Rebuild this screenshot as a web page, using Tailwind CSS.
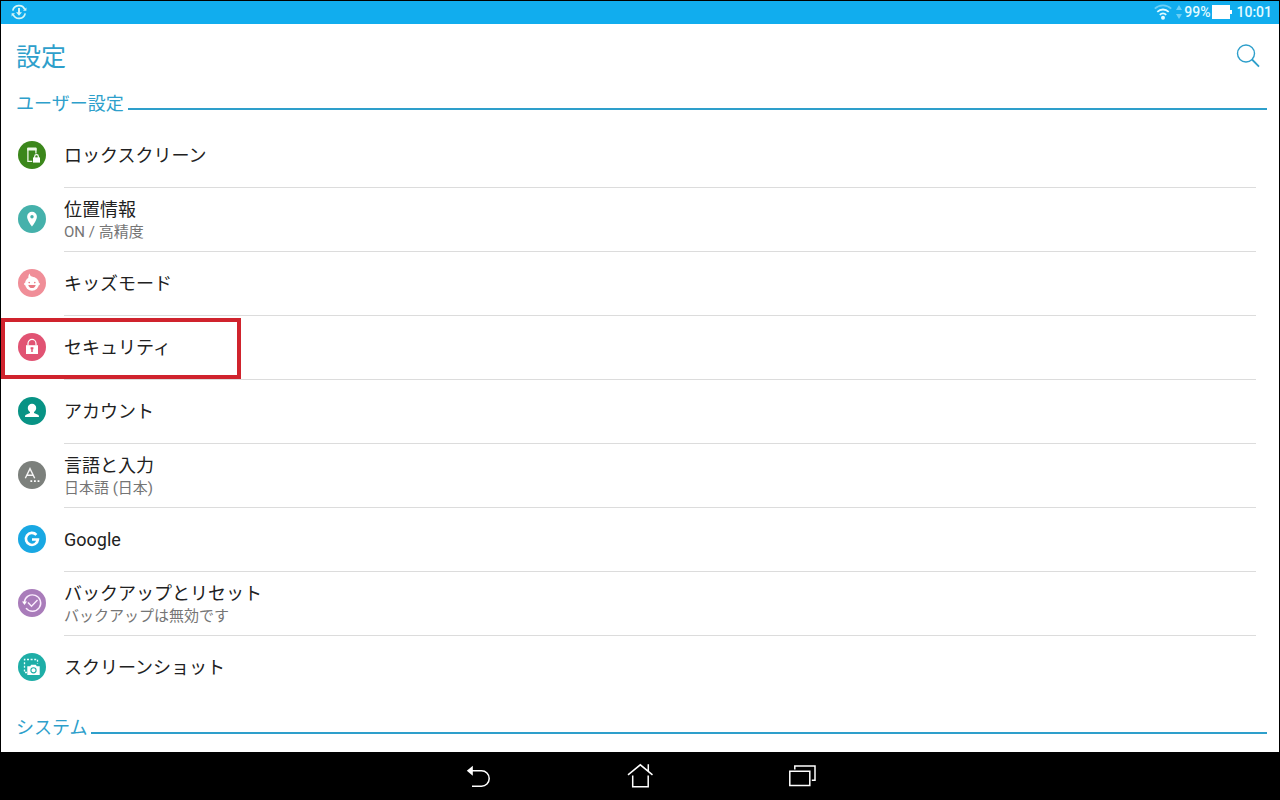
<!doctype html>
<html lang="ja">
<head>
    <meta charset="UTF-8">
    <meta name="viewport" content="width=device-width, initial-scale=1.0">
    <title>設定</title>
    <script src="https://cdn.jsdelivr.net/npm/@tailwindcss/browser@4"></script>
</head>
<body class="bg-black font-['Roboto','Noto_Sans_CJK_JP',sans-serif]">
<div class="flex flex-col h-screen px-px pt-px">
    <!-- status bar -->
    <header class="flex items-center justify-between h-[23px] shrink-0 bg-[#11adee] pl-2.5 pr-[7px] pb-px text-white">
        <svg viewBox="0 0 16 16" class="w-4 h-4" fill="none" stroke="#d5f5f5" stroke-width="1.7">
            <path d="M1.8 6.6A6.3 6.3 0 0 1 13.800 5.500M14.200 9.400A6.300 6.300 0 0 1 2.200 10.500"/>
            <path d="M8 4v6" stroke-width="2"/>
            <path d="M5 8.200h6L8 11.800zM12 6.800h3.400V3.600zM4 9.200H.6v3.200z" fill="#d5f5f5" stroke="none"/>
        </svg>
        <div class="flex items-center text-sm leading-5 font-medium text-[#e2fbff]">
            <svg viewBox="0 0 18 16" class="w-[18px] h-4" fill="none" stroke="#e2fbff" stroke-width="1.8">
                <path d="M.8 4.6a11.8 11.8 0 0 1 16.4 0" stroke="#6ccff5"/>
                <path d="M3.3 7.8a8.2 8.2 0 0 1 11.4 0M5.8 10.8a4.6 4.6 0 0 1 6.4 0"/>
                <circle cx="9" cy="13.8" r="2" fill="#e2fbff" stroke="none"/>
            </svg>
            <svg viewBox="0 0 6 16" class="w-1.5 h-4 ml-1 mr-0.5" fill="#6ccff5">
                <path d="M0 6l3-5 3 5zM0 10h6l-3 5z"/>
            </svg>
            <span>99%</span>
            <svg viewBox="0 0 20 14" class="w-5 h-3.5 ml-0.5 mr-1" fill="#fff">
                <path d="M0 0h18v14H0zM18 5h2v4h-2z"/>
            </svg>
            <time>10:01</time>
        </div>
    </header>

    <main class="flex-1 min-h-0 overflow-hidden bg-white">
        <div class="flex items-center justify-between h-16 pl-[15px] pr-[19px]">
            <h1 class="pt-1 text-[25px] leading-8 text-[#2e9fcb]">設定</h1>
            <button type="button" aria-label="検索">
                <svg viewBox="0 0 24 24" class="w-6 h-6" fill="none" stroke="#2e9fcb" stroke-width="1.4">
                    <circle cx="10" cy="9.5" r="8.5"/>
                    <path d="M16 15.5l7 7.2" stroke-width="1.8"/>
                </svg>
            </button>
        </div>

        <section>
            <div class="flex items-center h-9 pb-1 gap-1 pl-[15px] pr-3">
                <h2 class="text-lg leading-6 text-[#2e9fcb]">ユーザー設定</h2>
                <div class="flex-1 h-0.5 mt-2.5 bg-[#2e9fcb]"></div>
            </div>
            <ul class="text-lg leading-6 text-[#212121]">
                <li>
                    <a href="#" class="flex items-center gap-[18px] pl-[17px] pr-[23px]">
                        <svg viewBox="0 0 28 28" class="w-7 h-7 mb-0.5">
                            <circle cx="14" cy="14" r="14" fill="#3b871b"/>
                            <path d="M17.9 12.5V8h-8v12.3h4.3" fill="none" stroke="#eef9e8" stroke-width="1.3"/>
                            <path d="M10.2 6.4h7.4c.6 0 1 .4 1 1v2.2H9.2V7.4c0-.6.4-1 1-1z" fill="#eef9e8"/>
                            <path d="M15 16.4h7v5.2h-7z" fill="#fff"/>
                            <path d="M16.7 17v-1.5a1.8 1.8 0 0 1 3.6 0V17" fill="none" stroke="#fff" stroke-width="1.2"/>
                        </svg>
                        <span class="flex flex-1 items-center h-16 border-b border-[#dcdcdc]">ロックスクリーン</span>
                    </a>
                </li>
                <li>
                    <a href="#" class="flex items-center gap-[18px] pl-[17px] pr-[23px]">
                        <svg viewBox="0 0 28 28" class="w-7 h-7 mb-0.5">
                            <circle cx="14" cy="14" r="14" fill="#45b1ab"/>
                            <path d="M14 6.8a4.9 4.9 0 0 0-4.9 4.9c0 3.600 4.900 9.800 4.900 9.800s4.900-6.200 4.900-9.800A4.900 4.900 0 0 0 14 6.800z" fill="#fff"/>
                            <circle cx="14" cy="11.7" r="1.7" fill="#45b1ab"/>
                        </svg>
                        <span class="flex flex-1 flex-col justify-center h-16 border-b border-[#dcdcdc]">
                            <span>位置情報</span>
                            <span class="text-[15px] leading-5 text-[#757575]">ON / 高精度</span>
                        </span>
                    </a>
                </li>
                <li>
                    <a href="#" class="flex items-center gap-[18px] pl-[17px] pr-[23px]">
                        <svg viewBox="0 0 28 28" class="w-7 h-7 mb-0.5">
                            <circle cx="14" cy="14" r="14" fill="#f08e98"/>
                            <g fill="#fff">
                                <circle cx="14" cy="14.8" r="7"/>
                                <circle cx="7.3" cy="15" r="1.2"/>
                                <circle cx="20.7" cy="15" r="1.2"/>
                                <path d="M10.500 9.500c-.4-2 .1-3.600 1.100-4.900.3 2 1.400 3.200 3.400 3.500z"/>
                            </g>
                            <circle cx="11.2" cy="13.6" r=".8" fill="#e87983"/>
                            <circle cx="16.8" cy="13.6" r=".8" fill="#e87983"/>
                            <path d="M10.3 16h7.4c-.3 2-1.8 3.100-3.700 3.100s-3.400-1.100-3.700-3.100z" fill="#e87983"/>
                        </svg>
                        <span class="flex flex-1 items-center h-16 border-b border-[#dcdcdc]">キッズモード</span>
                    </a>
                </li>
                <li class="relative">
                    <a href="#" class="flex items-center gap-[18px] pl-[17px] pr-[23px]">
                        <svg viewBox="0 0 28 28" class="w-7 h-7 mb-0.5">
                            <circle cx="14" cy="14" r="14" fill="#e15373"/>
                            <path d="M8 12.2h12V21H8z" fill="#fff"/>
                            <path d="M10 12.5v-2.1a4 4 0 0 1 8 0v2.1" fill="none" stroke="#fff" stroke-width="1.2"/>
                            <path d="M12.6 14.3h2.8v1.9h-.7v2.7h-1.4v-2.7h-.7z" fill="#e15373"/>
                        </svg>
                        <span class="flex flex-1 items-center h-16 border-b border-[#dcdcdc]">セキュリティ</span>
                    </a>
                    <!-- highlight frame -->
                    <div class="absolute left-0 top-0.5 w-60 h-[61px] border-4 border-[#d0232d] pointer-events-none"></div>
                </li>
                <li>
                    <a href="#" class="flex items-center gap-[18px] pl-[17px] pr-[23px]">
                        <svg viewBox="0 0 28 28" class="w-7 h-7 mb-0.5">
                            <circle cx="14" cy="14" r="14" fill="#089385"/>
                            <path d="M14 6.8a4.2 4.2 0 0 0-4.2 4.2c0 1.700.9 3.100 2.200 3.900v1.100l-4 1.700c-.7.300-1 1-1 2.300h14c0-1.300-.3-2-1-2.300L16 16v-1.100c1.300-.8 2.200-2.200 2.200-3.900A4.200 4.200 0 0 0 14 6.800z" fill="#fff"/>
                        </svg>
                        <span class="flex flex-1 items-center h-16 border-b border-[#dcdcdc]">アカウント</span>
                    </a>
                </li>
                <li>
                    <a href="#" class="flex items-center gap-[18px] pl-[17px] pr-[23px]">
                        <svg viewBox="0 0 28 28" class="w-7 h-7 mb-0.5">
                            <circle cx="14" cy="14" r="14" fill="#7c807c"/>
                            <path d="M7.3 17.2L12 7.6l4.7 9.6M8.9 14.3h6.2" fill="none" stroke="#f4f4f4" stroke-width="1.4"/>
                            <path d="M12.4 19.3h1.8v1.8h-1.8zM16 19.3h1.8v1.8H16zM19.6 19.3h1.8v1.8h-1.8z" fill="#fff"/>
                        </svg>
                        <span class="flex flex-1 flex-col justify-center h-16 border-b border-[#dcdcdc]">
                            <span>言語と入力</span>
                            <span class="text-[15px] leading-5 text-[#757575]">日本語 (日本)</span>
                        </span>
                    </a>
                </li>
                <li>
                    <a href="#" class="flex items-center gap-[18px] pl-[17px] pr-[23px]">
                        <svg viewBox="0 0 28 28" class="w-7 h-7 mb-0.5">
                            <circle cx="14" cy="14" r="14" fill="#19a8e3"/>
                            <path d="M18.4 9.9a6 6 0 1 0 1.500 4.600H14" fill="none" stroke="#fff" stroke-width="2.6"/>
                        </svg>
                        <span class="flex flex-1 items-center h-16 border-b border-[#dcdcdc]">Google</span>
                    </a>
                </li>
                <li>
                    <a href="#" class="flex items-center gap-[18px] pl-[17px] pr-[23px]">
                        <svg viewBox="0 0 28 28" class="w-7 h-7 mb-0.5">
                            <circle cx="14" cy="14" r="14" fill="#a97cba"/>
                            <path d="M6.3 13.5A8.2 8.2 0 1 1 8 19.1M10 13.5l3.5 3.7 6-6.3" fill="none" stroke="#fbeefe" stroke-width="1.4"/>
                            <path d="M4 12.6h5l-2.5 3.3z" fill="#fff"/>
                        </svg>
                        <span class="flex flex-1 flex-col justify-center h-16 border-b border-[#dcdcdc]">
                            <span>バックアップとリセット</span>
                            <span class="text-[15px] leading-5 text-[#757575]">バックアップは無効です</span>
                        </span>
                    </a>
                </li>
                <li>
                    <a href="#" class="flex items-center gap-[18px] pl-[17px] pr-[23px]">
                        <svg viewBox="0 0 28 28" class="w-7 h-7 mb-0.5">
                            <circle cx="14" cy="14" r="14" fill="#1eaea7"/>
                            <path d="M9 19.5H6.5v-13h13V11" fill="none" stroke="#e8fffd" stroke-width="1.3" stroke-dasharray="2 1.6"/>
                            <path d="M9.3 13.3h2.9l1-1.6h4.6l1 1.6h2.9V22H9.3z" fill="#fff"/>
                            <circle cx="15.5" cy="17.3" r="2.6" fill="none" stroke="#1eaea7" stroke-width="1.1"/>
                        </svg>
                        <span class="flex flex-1 items-center h-16">スクリーンショット</span>
                    </a>
                </li>
            </ul>
        </section>

        <section class="pt-3">
            <div class="flex items-center h-9 pb-1 gap-1 pl-[15px] pr-3">
                <h2 class="text-lg leading-6 text-[#2e9fcb]">システム</h2>
                <div class="flex-1 h-0.5 mt-2.5 bg-[#2e9fcb]"></div>
            </div>
        </section>
    </main>

    <nav class="flex items-center justify-center gap-[134px] h-12 shrink-0 bg-black">
        <button type="button" aria-label="戻る">
            <svg viewBox="0 0 28 28" class="w-7 h-7" fill="none" stroke="#fff" stroke-width="1.5">
                <path d="M7 8.8h10.5a7.7 7.7 0 0 1 0 15.4H8"/>
                <path d="M2.8 8.8l6-5v10z" fill="#fff" stroke="none"/>
            </svg>
        </button>
        <button type="button" aria-label="ホーム">
            <svg viewBox="0 0 28 28" class="w-7 h-7" fill="none" stroke="#fff" stroke-width="1.5">
                <path d="M2 12.8L14.3 2.8 26.5 12.8M22.3 9.3V2.3M6.7 13.5v11.2h15.5V13.5"/>
            </svg>
        </button>
        <button type="button" aria-label="最近使ったアプリ">
            <svg viewBox="0 0 28 28" class="w-7 h-7" fill="none" stroke="#fff" stroke-width="1.5">
                <path d="M1.8 9.3h20v14.3h-20zM6.8 7.5V4H27v14.3h-3.2"/>
            </svg>
        </button>
    </nav>
</div>
</body>
</html>
